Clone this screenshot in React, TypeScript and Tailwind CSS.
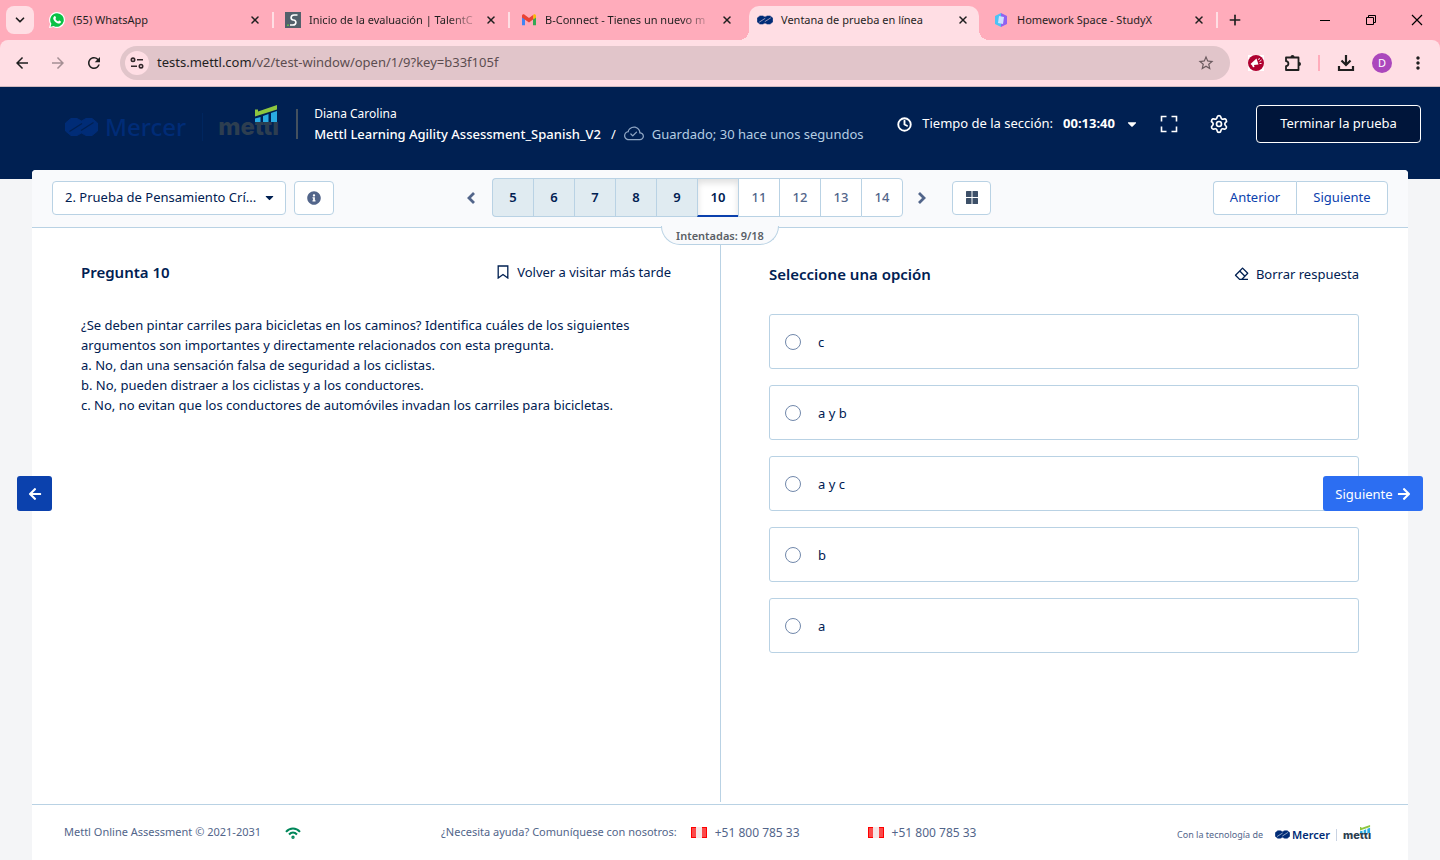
import React, { useState } from 'react';
import { ChevronDown, Clock, Plus, Settings, X } from 'lucide-react';
import { FaArrowLeft, FaArrowRight, FaCaretDown, FaInfoCircle } from 'react-icons/fa';
import { MdArrowBack, MdArrowForward, MdMoreVert, MdRefresh, MdStarOutline } from 'react-icons/md';
import { BsCloudCheck } from 'react-icons/bs';
import { RiEraserLine } from 'react-icons/ri';

const MercerMark = ({ className, cut }: { className: string; cut: string }) => (
  <svg viewBox="0 0 33 18" className={className} aria-hidden="true">
    <path
      d="M0.500 5 6 0.500h6L16.500 3 21 .5h6L32.500 5v8L27 17.500h-6L16.500 15 12 17.500H6L.5 13z"
      fill="currentColor"
      stroke="currentColor"
      strokeLinejoin="round"
    />
    <path d="M4.500 13.500 17 5.500M16 12.500 28.500 4.500" fill="none" stroke={cut} strokeWidth="1.200" />
  </svg>
);

const MettlBars = ({ className, cut }: { className: string; cut: string }) => (
  <svg viewBox="0 0 24 17" className={className} preserveAspectRatio="none" aria-hidden="true">
    <path d="M0 5h24v12H0z" fill={cut} />
    <path d="M0 13.500 5.500 12v5H0zM8 11l5.500-2v8H8zM16 8l6-2v11h-6z" fill="#29abe2" />
    <path d="M0 4.500h3v2L22 0v4.500L0 11.500z" fill="#8dc63f" />
  </svg>
);

const WhatsAppIcon = () => (
  <svg viewBox="0 0 16 16" className="size-4">
    <path d="M8 0a8 8 0 0 1 0 16 8 8 0 0 1-3.700-.9L0 16l1.100-4A8 8 0 0 1 8 0z" fill="#fff" />
    <path d="M8 1.200a6.800 6.800 0 1 1-3.400 12.700l-3 .8.800-2.900A6.800 6.800 0 0 1 8 1.200z" fill="#0ac145" />
    <path d="M5.400 4.200c.5-.4.900-.2 1.100.3l.5 1.200c.1.400-.5.900-.6 1.200.6 1.200 1.500 2 2.700 2.500.4-.1.800-1 1.200-.8l1.300.7c.5.200.4.700.2 1.100-.6 1.200-2 1.400-3.400.8-2-.8-3.500-2.300-4.100-4.200-.3-1.200.2-2.200 1.100-2.800z" fill="#fff" />
  </svg>
);

const TalentIcon = () => (
  <svg viewBox="0 0 16 16" className="size-4">
    <path d="M0 0h16v16H0z" fill="#52606b" />
    <path d="M12.500 3H9C5.500 3 5 7.500 8.500 8c3.500.3 3 5-.5 5H5" fill="none" stroke="#fff" strokeWidth="1.600" />
    <path d="M2 12.500h2v1.500H2z" fill="#62b54d" />
  </svg>
);

const GmailIcon = () => (
  <svg viewBox="0 0 16 12" className="w-4 h-3">
    <path d="M1 2v9.300h3V5z" fill="#4285f4" />
    <path d="M15 2v9.300h-3V5z" fill="#34a853" />
    <path d="M1 1.800C1 .4 2.500-.2 3.600.7L8 4l4.400-3.300v4.600L8 8.600 1 3.500z" fill="#ea4335" />
    <path d="M12.400.7C13.500-.2 15 .4 15 1.800v1.700l-2.600 1.900z" fill="#fbbc04" />
  </svg>
);

const StudyIcon = () => (
  <svg viewBox="0 0 16 16" className="size-4">
    <path d="M8 1 2 4v8l6 3z" fill="#4cc3f5" />
    <path d="m8 1 6 3v8l-6 3z" fill="#8f62f0" />
    <path d="m6 4 5 1-1 7-5-1z" fill="#cfe0ff" />
  </svg>
);

const SiteInfoIcon = () => (
  <svg viewBox="0 0 14 12" className="w-3.5 h-3" fill="none" stroke="#33282b" strokeWidth="1.600">
    <circle cx="3" cy="2.800" r="1.700" />
    <path d="M7 2.800h6M1 9.200h6" />
    <circle cx="11" cy="9.200" r="1.700" />
  </svg>
);

const MegaphoneIcon = () => (
  <svg viewBox="0 0 16 16" className="size-4">
    <path d="M0 0h16v16H0z" fill="#fff" />
    <circle cx="8" cy="8" r="8" fill="#b00030" />
    <path d="m2.500 9 6-5.500 2 6-4.500.5.500 2-1.500.3-1-2z" fill="#fff" />
    <path d="m10.500 5 1-2M11.500 6.500l2-1.500M11.500 8.500h2" stroke="#fff" strokeWidth="0.900" />
  </svg>
);

const PuzzleIcon = () => (
  <svg viewBox="0 0 18 18" className="size-[18px]" fill="none" stroke="currentColor" strokeWidth="1.800" strokeLinejoin="round">
    <path d="M2 3.500h12.500v12.500H2v-3.800c3.200-.4 3.200-4.600 0-5z" />
    <path d="M6.500 3a2 2 0 0 1 4 0zM15 8a2 2 0 0 1 0 4z" fill="currentColor" stroke="none" />
  </svg>
);

const DownloadIcon = () => (
  <svg viewBox="0 0 18 18" className="size-[18px]" fill="none" stroke="currentColor" strokeWidth="2.200">
    <path d="M9 1v9.500M4.500 6.500 9 11l4.500-4.500M2 12v4h14v-4" />
  </svg>
);

const BookmarkIcon = () => (
  <svg viewBox="0 0 12 14" className="w-3 h-3.5" fill="none" stroke="currentColor" strokeWidth="1.300">
    <path d="M1.200 1h9.600v12L6 9.500 1.200 13z" />
  </svg>
);

const FullscreenIcon = () => (
  <svg viewBox="0 0 18 18" className="size-[18px]" fill="none" stroke="currentColor" strokeWidth="1.600">
    <path d="M1.500 6.500v-5h5M11.500 1.500h5v5M16.500 11.500v5h-5M6.500 16.500h-5v-5" />
  </svg>
);

const Chevron = ({ d }: { d: string }) => (
  <svg viewBox="0 0 10 14" className="w-2.5 h-3.5" fill="none" stroke="currentColor" strokeWidth="2.800">
    <path d={d} />
  </svg>
);

const GridIcon = () => (
  <svg viewBox="0 0 12 13" className="w-3 h-[13px]" fill="#3d5068">
    <rect width="5.500" height="6" rx="0.500" />
    <rect x="6.500" width="5.500" height="6" rx="0.500" />
    <rect y="7" width="5.500" height="6" rx="0.500" />
    <rect x="6.500" y="7" width="5.500" height="6" rx="0.500" />
  </svg>
);

const WifiIcon = () => (
  <svg viewBox="0 0 16 12" className="w-4 h-3" fill="none" stroke="#00875a" strokeWidth="2">
    <path d="M1 4.800C5 .3 11 .3 15 4.800M4 7.500c2.500-2.600 5.500-2.600 8 0" />
    <circle cx="8" cy="10.200" r="0.700" />
  </svg>
);

const PeruFlag = () => (
  <svg viewBox="0 0 16 11" className="w-4 h-[11px]">
    <path d="M0 0h16v11H0z" fill="#f00" />
    <path d="M1 1h4v9H1zM11 1h4v9h-4z" fill="#fb4a4a" />
    <path d="M5 0h6v11H5z" fill="#f6e6e6" />
  </svg>
);

const tabs = [
  { title: '(55) WhatsApp', icon: <WhatsAppIcon /> },
  { title: 'Inicio de la evaluación | TalentC', icon: <TalentIcon />, fade: true },
  { title: 'B-Connect - Tienes un nuevo m', icon: <GmailIcon />, fade: true },
  { title: 'Ventana de prueba en línea', icon: <MercerMark className="w-4 h-2.5 text-[#002c77]" cut="#ffdee4" /> },
  { title: 'Homework Space - StudyX', icon: <StudyIcon /> },
];
const activeTab = 3;

const BrowserBar = () => (
  <div className="text-[#1f1f1f]">
    <div className="flex h-10 items-center bg-[#ffacbb] pl-1.5">
      <button aria-label="Buscar pestañas" className="flex size-7 items-center justify-center rounded-lg bg-[#ffdee4]">
        <ChevronDown size={14} strokeWidth={3} />
      </button>
      <div className="ml-1 flex min-w-0 self-stretch">
        {tabs.map((tab, i) => {
          const active = i === activeTab;
          const divider = i !== activeTab && i !== activeTab - 1;
          return (
            <div key={tab.title} className="relative flex w-[236px] min-w-0 px-[3px] pt-1.5">
              <div className={`relative flex flex-1 items-center pl-2 pr-2.5 pb-1.5 min-w-0 ${active ? 'rounded-t-[10px] bg-[#ffdee4]' : ''}`}>
                {active && (
                  <>
                    <span className="absolute bottom-0 -left-2.5 size-2.5 bg-[radial-gradient(circle_at_0_0,#ffacbb_10px,#ffdee4_10px)]" />
                    <span className="absolute bottom-0 -right-2.5 size-2.5 bg-[radial-gradient(circle_at_100%_0,#ffacbb_10px,#ffdee4_10px)]" />
                  </>
                )}
                {tab.icon}
                <span className="ml-2 flex-1 whitespace-nowrap text-[11px] leading-4">
                  <span className={tab.fade ? '[mask-image:linear-gradient(to_right,black_85%,rgba(0,0,0,0.25))]' : ''}>{tab.title}</span>
                </span>
                <button aria-label="Cerrar pestaña"><X size={12} strokeWidth={3} /></button>
              </div>
              {divider && <span className="absolute right-0 top-3 h-4 w-0.5 bg-[#ffdee4]" />}
            </div>
          );
        })}
      </div>
      <button aria-label="Nueva pestaña" className="ml-[9px]"><Plus size={16} strokeWidth={2.500} /></button>
      <div className="ml-auto flex items-center gap-[34px] pr-[17px] text-black">
        <button aria-label="Minimizar">
          <svg viewBox="0 0 12 12" className="size-3" stroke="currentColor">
            <path d="M1 6.500h10" />
          </svg>
        </button>
        <button aria-label="Restaurar">
          <svg viewBox="0 0 12 12" className="size-3" fill="none" stroke="currentColor">
            <path d="M1.500 3.500h7v7h-7zM3.500 3.500v-2h7v7h-2" />
          </svg>
        </button>
        <button aria-label="Cerrar">
          <svg viewBox="0 0 12 12" className="size-3" fill="none" stroke="currentColor" strokeWidth="1.200">
            <path d="m1 1 10 10M11 1 1 11" />
          </svg>
        </button>
      </div>
    </div>
    <div className="bg-[#ffacbb]">
      <div className="flex h-[47px] items-center rounded-t-lg border-b border-[#d0b9bf] bg-[#ffdee4] pl-[13px] pr-3">
        <div className="flex gap-[18px]">
          <button aria-label="Atrás"><MdArrowBack size={18} /></button>
          <button aria-label="Adelante" className="text-[#a58f94]"><MdArrowForward size={18} /></button>
          <button aria-label="Recargar"><MdRefresh size={18} /></button>
        </div>
        <div className="ml-[17px] flex h-[34px] flex-1 items-center rounded-full bg-[#e1c5ca] pl-[5px] pr-[15px]">
          <span className="flex size-6 items-center justify-center rounded-full bg-[#ffdee4]"><SiteInfoIcon /></span>
          <a href="#" className="ml-2 flex-1 text-[13px] text-[#5c4d50]">
            <span className="text-[#1f1f1f]">tests.mettl.com</span>/v2/test-window/open/1/9?key=b33f105f
          </a>
          <button aria-label="Favorito" className="text-[#6b5b5f]"><MdStarOutline size={18} /></button>
        </div>
        <button aria-label="Extensión" className="ml-[18px]"><MegaphoneIcon /></button>
        <button aria-label="Extensiones" className="ml-5"><PuzzleIcon /></button>
        <span className="ml-4 h-4 w-0.5 bg-[#ffacbb]" />
        <button aria-label="Descargas" className="ml-[17px]"><DownloadIcon /></button>
        <button className="ml-[17px] size-5 rounded-full bg-[#ab47bc] text-[11px] leading-5 text-white">D</button>
        <button aria-label="Menú" className="ml-4"><MdMoreVert size={20} /></button>
      </div>
    </div>
  </div>
);

const Header = () => (
  <header className="bg-[#002052] pb-[18px] text-white">
    <div className="flex h-[74px] items-center pl-[65px] pr-[19px]">
      <div className="flex items-center pt-1.5 text-[#002c77]">
        <MercerMark className="h-[18px] w-[33px]" cut="#002052" />
        <span className="ml-[7px] text-2xl font-medium leading-8">Mercer</span>
        <span className="ml-4 h-7 w-px bg-[#00265f]" />
        <span className="relative ml-[15px] font-['Inter'] text-2xl font-extrabold leading-8 text-[#2d3e50]">
          mettl
          <MettlBars className="absolute -top-1.5 right-0 h-[17px] w-6" cut="#002052" />
        </span>
      </div>
      <span className="ml-[17px] h-[30px] w-0.5 bg-[#44515f]" />
      <div className="ml-4">
        <div className="text-xs leading-5">Diana Carolina</div>
        <div className="flex items-center text-[13px] leading-5">
          <h1 className="font-medium">Mettl Learning Agility Assessment_Spanish_V2</h1>
          <span className="ml-2.5">/</span>
          <BsCloudCheck size={20} className="ml-2 text-[#8fa6c4]" />
          <span className="ml-2 text-[#b4cde2]">Guardado; 30 hace unos segundos</span>
        </div>
      </div>
      <div className="ml-auto flex items-center text-[13px]">
        <Clock size={15} strokeWidth={3} />
        <span className="ml-2.5">Tiempo de la sección:</span>
        <button className="ml-2.5 flex items-center font-bold">
          00:13:40 <FaCaretDown size={14} className="ml-2.5" />
        </button>
        <button aria-label="Pantalla completa" className="ml-[21px]"><FullscreenIcon /></button>
        <button aria-label="Configuración" className="ml-[31px]"><Settings size={20} /></button>
        <button className="ml-[27px] h-[38px] w-[165px] rounded border border-white bg-[#00153a]">Terminar la prueba</button>
      </div>
    </div>
  </header>
);

const pages = [5, 6, 7, 8, 9, 10, 11, 12, 13, 14];
const currentPage = 10;

const pageStyle = (n: number) => {
  if (n < currentPage) return 'bg-[#e0ebf1] text-[#002052] font-semibold border-[#b9d2e4]';
  if (n === currentPage) return 'bg-white text-[#002052] font-semibold border-[#b9d2e4] pt-px border-b-2 border-b-[#0b41ad] shadow-[inset_0_4px_6px_rgba(0,0,0,0.12)]';
  return 'bg-white text-[#52658a] font-medium border-[#b9d2e4]';
};

const Toolbar = () => (
  <div className="relative grid h-[58px] grid-cols-[1fr_auto_1fr] items-center rounded-t border-b border-[#b9d2e4] bg-[#f9fafc] px-5 pb-0.5 text-[13px]">
    <div className="flex gap-2">
      <div className="relative">
        <select aria-label="Sección" className="h-[34px] w-[234px] appearance-none rounded border border-[#b9d2e4] bg-white pl-3 pr-6 text-[#002052]">
          <option>2. Prueba de Pensamiento Crí...</option>
        </select>
        <FaCaretDown size={13} className="pointer-events-none absolute right-2.5 top-2.5 text-[#002052]" />
      </div>
      <button aria-label="Información" className="flex h-[34px] w-10 items-center justify-center rounded border border-[#b9d2e4] bg-white text-[#52658a]">
        <FaInfoCircle size={14} />
      </button>
    </div>
    <nav className="flex items-center text-[#52658a]">
      <button aria-label="Páginas anteriores" className="flex w-[43px] justify-center"><Chevron d="M8 2 3 7l5 5" /></button>
      <div className="flex">
        {pages.map((n) => (
          <button key={n} className={`h-[39px] w-[41px] border-y border-l first:rounded-l last:w-[42px] last:rounded-r last:border-r ${pageStyle(n)}`}>
            {n}
          </button>
        ))}
      </div>
      <button aria-label="Páginas siguientes" className="flex w-[38px] justify-center"><Chevron d="m2 2 5 5-5 5" /></button>
      <button aria-label="Ver todas" className="ml-[11px] flex h-[34px] w-[39px] items-center justify-center rounded border border-[#b9d2e4] bg-white">
        <GridIcon />
      </button>
    </nav>
    <div className="flex justify-end text-[#0b41ad]">
      <button className="h-[34px] w-[83px] rounded-l border border-r-0 border-[#b9d2e4] bg-white">Anterior</button>
      <button className="h-[34px] w-[92px] rounded-r border border-[#b9d2e4] bg-white">Siguiente</button>
    </div>
    <div className="absolute left-1/2 top-14 z-10 h-[19px] w-[118px] -translate-x-1/2 rounded-b-full border border-t-0 border-[#b9d2e4] bg-[#f9fafc] text-center text-[11px] font-semibold leading-5 text-[#5a5f66]">
      Intentadas: 9/18
    </div>
  </div>
);

const options = ['c', 'a y b', 'a y c', 'b', 'a'];

const Question = () => {
  const [answer, setAnswer] = useState<string | null>(null);

  return (
    <div className="relative grid flex-1 grid-cols-2 pb-0.5 text-[13px] leading-5 text-[#002052]">
      <section className="px-[49px] pt-[34px]">
        <div className="flex items-center justify-between">
          <h2 className="text-[15px] font-semibold leading-5">Pregunta {currentPage}</h2>
          <button className="flex items-center gap-2"><BookmarkIcon /> Volver a visitar más tarde</button>
        </div>
        <div className="mt-[33px]">
          <p>
            ¿Se deben pintar carriles para bicicletas en los caminos? Identifica cuáles de los siguientes argumentos son importantes y directamente relacionados con esta pregunta.
          </p>
          <p>a. No, dan una sensación falsa de seguridad a los ciclistas.</p>
          <p>b. No, pueden distraer a los ciclistas y a los conductores.</p>
          <p>c. No, no evitan que los conductores de automóviles invadan los carriles para bicicletas.</p>
        </div>
      </section>

      <section className="border-l border-[#b9d2e4] pl-12 pr-[49px] pt-9">
        <div className="flex items-center justify-between">
          <h2 className="text-[15px] font-semibold leading-5">Seleccione una opción</h2>
          <button className="flex items-center gap-1.5" onClick={() => setAnswer(null)}>
            <RiEraserLine size={16} /> Borrar respuesta
          </button>
        </div>
        <div className="mt-[30px] flex flex-col gap-4">
          {options.map((option) => (
            <label key={option} className="flex h-[55px] items-center rounded-[3px] border border-[#b9d2e4] pl-[15px] pt-px">
              <input
                type="radio"
                name="answer"
                value={option}
                checked={answer === option}
                onChange={() => setAnswer(option)}
                className="size-4 appearance-none rounded-full border border-[#7188ab] checked:border-4"
              />
              <span className="ml-[17px]">{option}</span>
            </label>
          ))}
        </div>
      </section>

      <button aria-label="Anterior" className="absolute top-[248px] -left-[15px] flex h-[35px] w-[35px] items-center justify-center rounded-[3px] bg-[#0b41ad] text-white">
        <FaArrowLeft size={14} />
      </button>
      <button className="absolute top-[248px] -right-[15px] flex h-[35px] w-[100px] items-center justify-center gap-1 rounded-[3px] bg-[#2c6ef2] text-white">
        Siguiente <FaArrowRight size={14} />
      </button>
    </div>
  );
};

const Footer = () => (
  <footer className="flex h-14 items-center border-t border-[#b9d2e4] pl-8 pr-[37px] text-[11px] text-[#52658a]">
    <span>Mettl Online Assessment © 2021-2031</span>
    <span className="ml-6"><WifiIcon /></span>
    <span className="ml-[140px]">¿Necesita ayuda? Comuníquese con nosotros:</span>
    <a href="tel:+5180078533" className="ml-3.5 flex items-center gap-2 text-xs"><PeruFlag /> +51 800 785 33</a>
    <a href="tel:+5180078533" className="ml-[68px] flex items-center gap-2 text-xs"><PeruFlag /> +51 800 785 33</a>
    <div className="ml-auto flex items-center pt-1 leading-4">
      <span className="text-[9px]">Con la tecnología de</span>
      <MercerMark className="ml-3 h-[9px] w-[15px] text-[#002c77]" cut="#ffffff" />
      <span className="ml-0.5 font-semibold text-[#002c77]">Mercer</span>
      <span className="ml-1.5 h-3 w-px bg-[#c9d3e2]" />
      <span className="relative ml-1.5 font-['Inter'] font-extrabold text-[#2d3e50]">
        mettl
        <MettlBars className="absolute -top-0.5 right-0 h-2 w-[11px]" cut="#ffffff" />
      </span>
    </div>
  </footer>
);

export default function App() {
  return (
    <div className="flex min-h-screen flex-col bg-[#f4f5f7] font-['Noto_Sans',sans-serif]">
      <BrowserBar />
      <Header />
      <main className="relative z-10 mx-8 -mt-[9px] flex flex-1 flex-col rounded-t bg-white">
        <Toolbar />
        <Question />
        <Footer />
      </main>
    </div>
  );
}
